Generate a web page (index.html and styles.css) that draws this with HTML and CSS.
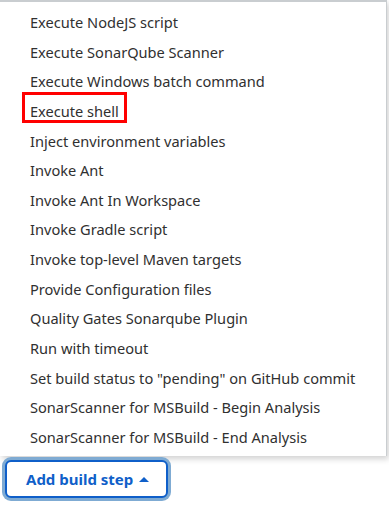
FILE: index.html
```html
<!DOCTYPE html>
<html lang="en">
<head>
    <meta charset="UTF-8">
    <title>Add build step</title>
    <link rel="stylesheet" href="styles.css">
</head>
<body>
    <div class="step-menu">
        <ul class="menu-list">
            <li>Execute NodeJS script</li>
            <li>Execute SonarQube Scanner</li>
            <li>Execute Windows batch command</li>
            <li><span class="marked">Execute shell</span></li>
            <li>Inject environment variables</li>
            <li>Invoke Ant</li>
            <li>Invoke Ant In Workspace</li>
            <li>Invoke Gradle script</li>
            <li>Invoke top-level Maven targets</li>
            <li>Provide Configuration files</li>
            <li>Quality Gates Sonarqube Plugin</li>
            <li>Run with timeout</li>
            <li>Set build status to "pending" on GitHub commit</li>
            <li>SonarScanner for MSBuild - Begin Analysis</li>
            <li>SonarScanner for MSBuild - End Analysis</li>
        </ul>
    </div>
    <button class="add-btn" type="button">Add build step <span class="caret"></span></button>
</body>
</html>
```

FILE: styles.css
```css
* {
    margin: 0;
    padding: 0;
    box-sizing: border-box;
    font-family: 'Noto Sans', 'Open Sans', sans-serif;
}

body {
    background: #ffffff;
    width: 389px;
    height: 505px;
    overflow: hidden;
}

.step-menu {
    width: 387px;
    background: white;
    border-top: 2px solid #c9cdd0;
    border-right: 1px solid #c9cdd0;
    box-shadow: 2px 3px 6px rgba(0, 0, 0, 0.18);
    padding: 6px 0 4px 0;
}

.menu-list {
    list-style: none;
}

.menu-list li {
    height: 29.64px;
    line-height: 29.64px;
    padding-left: 30px;
    font-size: 14.6px;
    color: #303030;
    white-space: nowrap;
}

/* annotation box drawn over the item */
.marked {
    position: relative;
    top: -5px;
    display: inline-block;
    margin-left: -8px;
    padding: 3px 5px 0 5px;
    height: 31px;
    line-height: 26px;
    border: 3px solid #ff0000;
}

.add-btn {
    display: flex;
    align-items: center;
    gap: 6px;
    margin: 4px 0 0 5px;
    width: 163px;
    height: 38px;
    padding-left: 19px;
    background: white;
    border: 2px solid #0f5fc9;
    border-radius: 6px;
    box-shadow: 0 0 0 3px #7fabd3;
    color: #0f5fc9;
    font-size: 15px;
    font-weight: 700;
}

.caret {
    width: 0;
    height: 0;
    border-left: 5px solid transparent;
    border-right: 5px solid transparent;
    border-bottom: 5px solid #0f5fc9;
}
```
